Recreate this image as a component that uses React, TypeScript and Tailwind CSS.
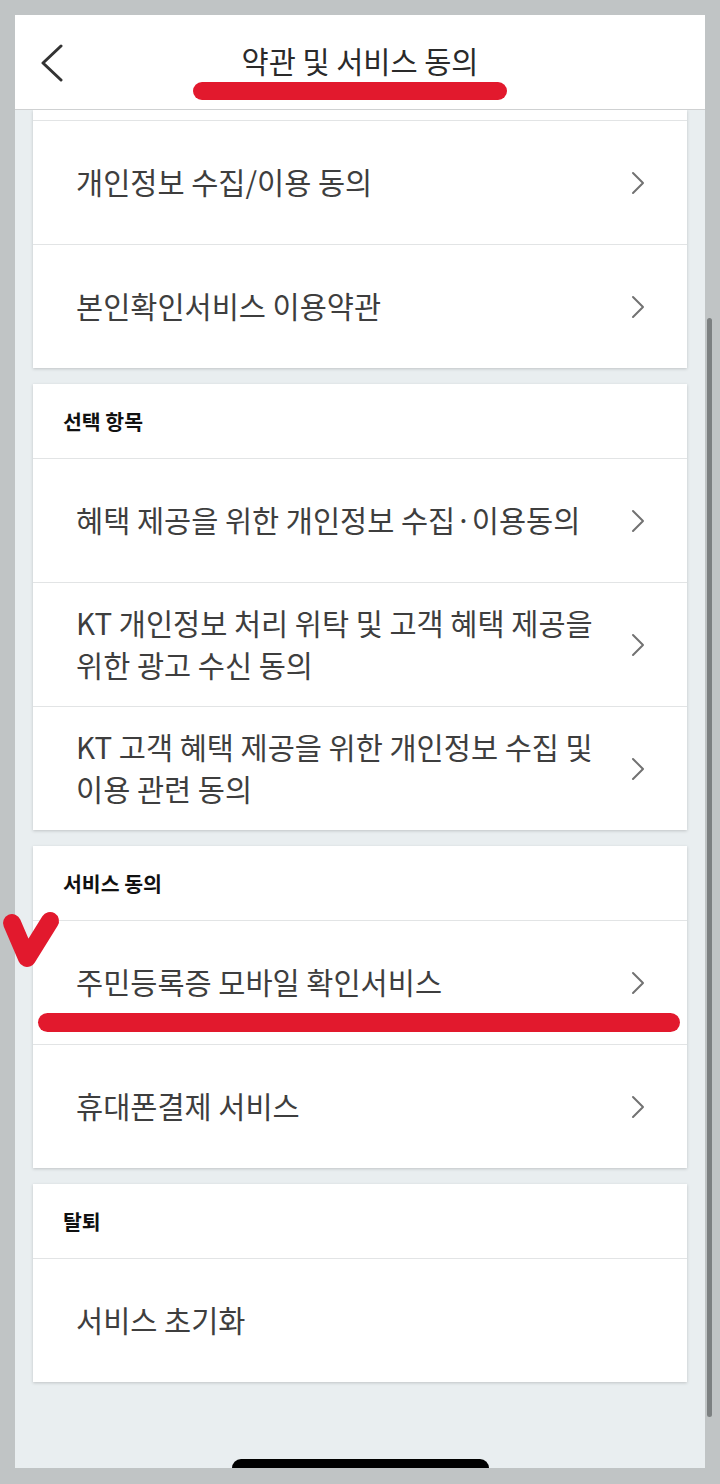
import React from "react";

const font = { fontFamily: '"Noto Sans CJK KR", "Noto Sans", sans-serif' };

function Chevron() {
  return (
    <svg width="14" height="24" viewBox="0 0 14 24" fill="none" className="shrink-0">
      <path d="M2 2 L12 12 L2 22" stroke="#727272" strokeWidth="2" strokeLinecap="round" strokeLinejoin="round" />
    </svg>
  );
}

function Row({ lines, chevron = true }: { lines: string[]; chevron?: boolean }) {
  return (
    <div className="h-[124px] border-t-[1.5px] border-[#e2e4e5] flex items-center pl-[43px] pr-[42px]">
      <div className="flex-1 pb-[4px] text-[29.5px] leading-[42px] text-[#3e3e3e]">
        {lines.map((l, i) => (
          <div key={i} className="whitespace-nowrap">{l}</div>
        ))}
      </div>
      {chevron && <Chevron />}
    </div>
  );
}

function SectionHeader({ title }: { title: string }) {
  return (
    <div className="h-[74px] flex items-center pl-[30px] text-[20.5px] font-bold text-[#111111]">{title}</div>
  );
}

function Card({ children }: { children: React.ReactNode }) {
  return (
    <div className="mx-[18px] bg-white shadow-[0_1px_3px_rgba(0,0,0,0.18)]">{children}</div>
  );
}

export default function App() {
  return (
    <div style={font} className="relative w-[720px] h-[1484px] bg-[#c0c4c5] pt-[15px] pl-[15px] flex overflow-hidden">
      <div className="w-[690px] h-[1453px] bg-[#e9eef0] flex flex-col">
        <div className="h-[95px] bg-white border-b-[1.5px] border-[#cfd1d2] flex items-center relative shrink-0">
          <div className="pl-[25px] pt-[2px]">
            <svg width="24" height="38" viewBox="0 0 24 38" fill="none">
              <path d="M21 2 L3 19 L21 36" stroke="#333333" strokeWidth="3" strokeLinecap="round" strokeLinejoin="round" />
            </svg>
          </div>
          <div className="absolute inset-x-0 top-[25px] text-center text-[29.5px] font-normal text-[#2a2a2a] leading-[40px]">
            약관 및 서비스 동의
          </div>
        </div>

        <div className="flex flex-col overflow-hidden pb-[6px]">
          <Card>
            <div className="h-[10px]" />
            <Row lines={["개인정보 수집/이용 동의"]} />
            <Row lines={["본인확인서비스 이용약관"]} />
          </Card>

          <div className="mt-[16px]">
            <Card>
              <SectionHeader title="선택 항목" />
              <Row lines={["혜택 제공을 위한 개인정보 수집·이용동의"]} />
              <Row lines={["KT 개인정보 처리 위탁 및 고객 혜택 제공을", "위한 광고 수신 동의"]} />
              <Row lines={["KT 고객 혜택 제공을 위한 개인정보 수집 및", "이용 관련 동의"]} />
            </Card>
          </div>

          <div className="mt-[16px]">
            <Card>
              <SectionHeader title="서비스 동의" />
              <Row lines={["주민등록증 모바일 확인서비스"]} />
              <Row lines={["휴대폰결제 서비스"]} />
            </Card>
          </div>

          <div className="mt-[16px]">
            <Card>
              <SectionHeader title="탈퇴" />
              <Row lines={["서비스 초기화"]} chevron={false} />
            </Card>
          </div>
        </div>

        <div className="mt-auto mx-auto w-[257px] h-[9px] bg-black rounded-t-full rounded-b-[3px]" />
      </div>

      <div className="w-[15px] h-full">
        <div className="mt-[303px] ml-[2px] w-[5px] h-[1099px] rounded-full bg-[#7c8081]" />
      </div>

      {/* red annotations */}
      <div className="absolute left-[193px] top-[82px] w-[314px] h-[18px] rounded-full bg-[#e2192d]" />
      <div className="absolute left-[38px] top-[1013px] w-[642px] h-[19px] rounded-full bg-[#e2192d]" />
      <svg className="absolute left-0 top-[900px]" width="80" height="90" viewBox="0 0 80 90" fill="none">
        <path d="M12 23 L27 58 L50 21" stroke="#e2192d" strokeWidth="18" strokeLinecap="round" strokeLinejoin="round" />
      </svg>
    </div>
  );
}
